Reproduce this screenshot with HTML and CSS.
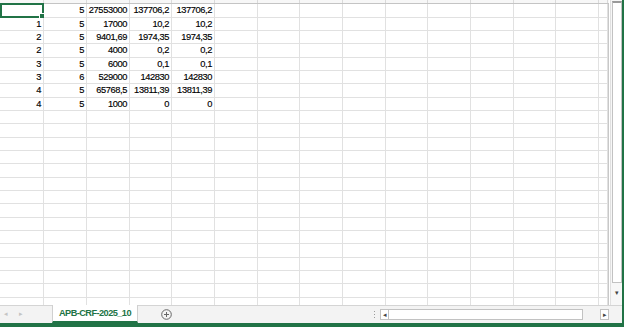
FILE: index.html
```html
<!DOCTYPE html>
<html lang="en">
<head>
    <meta charset="UTF-8">
    <title>APB-CRF-2025_10</title>
    <link rel="stylesheet" href="styles.css">
</head>
<body>
    <div class="window">
        <div class="main">
            <div class="sheet">
                <div class="colhead" id="colhead"></div>
                <div class="grid" id="grid"></div>
            </div>
            <div class="vscroll">
                <div class="thumb"></div>
                <div class="vbtn">&#9662;</div>
            </div>
        </div>
        <div class="tabbar">
            <div class="nav"><span>&#9666;</span><span>&#9656;</span></div>
            <div class="tab">APB-CRF-2025_10</div>
            <div class="add">
                <svg width="11" height="11" viewBox="0 0 11 11">
                    <circle cx="5.5" cy="5.5" r="4.8" fill="none" stroke="#666" stroke-width="1"/>
                    <path d="M5.5 3v5M3 5.5h5" stroke="#666" stroke-width="1"/>
                </svg>
            </div>
            <div class="spacer"></div>
            <div class="dots"><i></i><i></i><i></i></div>
            <div class="hscroll">
                <div class="hbtn">&#9666;</div>
                <div class="track"></div>
                <div class="gap"></div>
                <div class="hbtn">&#9656;</div>
            </div>
            <div class="corner"></div>
        </div>
        <div class="status"></div>
    </div>
    <script>
        let data = [
            ["", "5", "27553000", "137706,2", "137706,2"],
            ["1", "5", "17000", "10,2", "10,2"],
            ["2", "5", "9401,69", "1974,35", "1974,35"],
            ["2", "5", "4000", "0,2", "0,2"],
            ["3", "5", "6000", "0,1", "0,1"],
            ["3", "6", "529000", "142830", "142830"],
            ["4", "5", "65768,5", "13811,39", "13811,39"],
            ["4", "5", "1000", "0", "0"]
        ];
        let cols = 15;
        let rows = 23;
        let grid = document.getElementById("grid");
        let head = document.getElementById("colhead");
        for (let c = 0; c < cols; c++) {
            let h = document.createElement("div");
            h.className = "hcell";
            head.appendChild(h);
        }
        for (let r = 0; r < rows; r++) {
            for (let c = 0; c < cols; c++) {
                let cell = document.createElement("div");
                cell.className = "cell";
                if (data[r] && data[r][c] !== undefined) {
                    cell.textContent = data[r][c];
                }
                if (r === 0 && c === 0) {
                    cell.classList.add("active");
                }
                grid.appendChild(cell);
            }
        }
    </script>
</body>
</html>
```

FILE: styles.css
```css
* { box-sizing: border-box; }
body { margin: 0; width: 624px; height: 327px; overflow: hidden; background: #fff; font-family: "Liberation Sans", Arial, sans-serif; }
.window { display: flex; flex-direction: column; width: 624px; height: 327px; border-right: 2px solid #217346; }
.main { display: flex; height: 305px; overflow: hidden; }
.sheet { width: 610px; overflow: hidden; border-right: 1px solid #fff; }
.colhead, .grid { display: grid; grid-template-columns: 44px 43px 43px 42px 43px 43px 42px 43px 43px 42px 43px 43px 42px 43px 9px; }
.colhead { height: 4px; background: #f7f7f7; border-bottom: 1px solid #c4c4c4; }
.hcell { border-right: 1px solid #dadada; }
.grid { grid-template-rows: repeat(7, 14px 13px 13px) 14px 13px; width: 609px; border-right: 1px solid #c8c8c8; }
.cell { position: relative; border-right: 1px solid #e1e1e1; border-bottom: 1px solid #e1e1e1; font-size: 9.3px; line-height: 12px; letter-spacing: -0.4px; text-align: right; padding-right: 2px; color: #000; white-space: nowrap; overflow: visible; -webkit-text-stroke: 0.15px #000; }
.cell.active { border: 2px solid #217346; margin: -1px 0 0 0; }
.cell.active::after { content: ""; position: absolute; right: -3px; bottom: -3px; width: 4px; height: 4px; background: #217346; border: 1px solid #fff; }
.vscroll { width: 12px; display: flex; flex-direction: column; background: #f7f7f7; border-left: 1px solid #e0e0e0; }
.thumb { height: 282px; margin: 1px 0 0 1px; background: #fff; border: 1px solid #c2c2c2; border-top: 2px solid #9a9a9a; }
.vbtn { flex: 1; font-size: 7px; color: #444; text-align: center; line-height: 20px; }
.tabbar { display: flex; align-items: stretch; height: 18px; background: #f3f3f3; border-top: 1px solid #d4d4d4; }
.nav { width: 52px; display: flex; gap: 11px; padding-left: 4px; color: #c4c4c4; font-size: 7px; line-height: 16px; }
.tab { width: 86px; margin-top: -1px; background: #fff; border-left: 1px solid #d0d0d0; border-right: 1px solid #d0d0d0; border-bottom: 2px solid #217346; color: #217346; font-weight: bold; font-size: 9.2px; line-height: 16px; text-align: center; letter-spacing: -0.55px; }
.add { width: 56px; display: flex; align-items: center; justify-content: center; }
.spacer { flex: 1; }
.dots { width: 12px; display: flex; flex-direction: column; align-items: center; justify-content: center; gap: 2px; }
.dots i { display: block; width: 1px; height: 1px; background: #9a9a9a; }
.hscroll { width: 229px; display: flex; align-items: center; }
.hbtn { width: 9px; height: 11px; background: #fff; border: 1px solid #c2c2c2; color: #444; font-size: 7px; line-height: 9px; text-align: center; }
.track { width: 194px; height: 11px; background: #fff; border: 1px solid #c2c2c2; border-left: none; }
.gap { width: 17px; }
.corner { width: 13px; }
.status { height: 4px; background: #217346; }
```
